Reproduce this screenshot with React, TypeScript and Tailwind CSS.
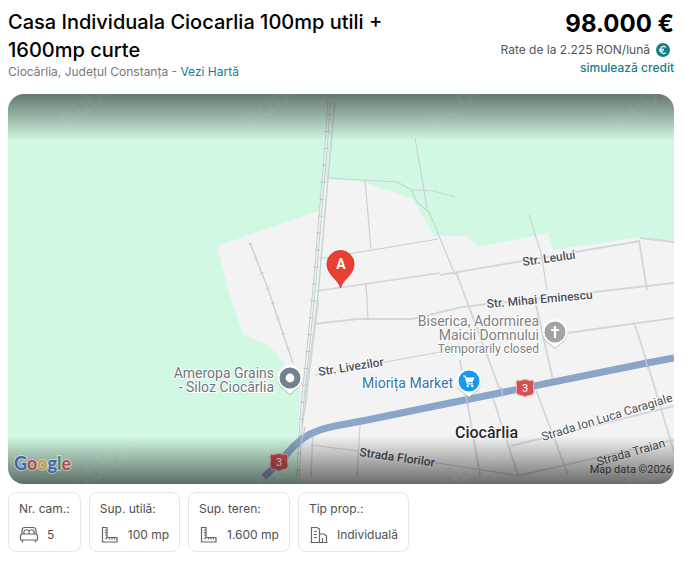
import type { ReactNode } from "react";

const minorRoads = [
  "M328 178 L397 182 L412 190 L434 191 L455 197",
  "M415 138 L427 208",
  "M411 189 L417 202 L429 212 L442 243 L455 275",
  "M365 180 L371 249",
  "M319 259 L438 239",
  "M366 284 L368 319",
  "M529 215 L541 253 L547 290",
  "M315 375 L440 352",
  "M311 445 L358 451",
  "M360 425 L357 477",
  "M425 461 L520 476",
];

const mediumRoads = [
  "M440 275 L640 241",
  "M640 238 L674 242",
  "M456 272 L500 390",
  "M639 240 L647 290",
  "M314 324 L357 319 L412 319 L462 307 L674 283",
  "M536 305 L553 380",
  "M460 360 L466 395 L480 475",
  "M493 398 L518 475",
  "M536 390 L568 475",
  "M567 333 L674 318",
  "M635 325 L647 362 L674 452",
  "M511 446 L674 406",
  "M517 476 L674 440",
];

export default function App() {
  return (
    <main className="w-full bg-white px-2 pr-[11px] pt-2 pb-3 font-['Inter',sans-serif] text-black">
      <header className="flex items-start justify-between">
        <div className="w-2/3">
          <h1 className="text-xl font-medium leading-7">
            Casa Individuala Ciocarlia 100mp utili + 1600mp curte
          </h1>
          <p className="text-xs leading-4 text-[#777777]">
            Ciocârlia, Județul Constanța -{" "}
            <a href="#harta" className="text-[#15808a]">
              Vezi Hartă
            </a>
          </p>
        </div>
        <div className="flex flex-col items-end">
          <p className="text-2xl font-bold leading-8">98.000 €</p>
          <p className="flex items-center gap-1.5 pr-1 text-xs leading-5 text-[#555555]">
            Rate de la 2.225 RON/lună
            <EuroIcon />
          </p>
          <a
            href="#credit"
            className="text-xs font-medium leading-4 text-[#15808a]">
            simulează credit
          </a>
        </div>
      </header>

      <section
        id="harta"
        aria-label="Hartă"
        className="mt-3.5 overflow-hidden rounded-2xl">
        <ListingMap />
      </section>

      <section className="mt-2 flex flex-wrap gap-2">
        <SpecCard label="Nr. cam.:" value="5" icon={<BedIcon />} />
        <SpecCard label="Sup. utilă:" value="100 mp" icon={<RulerIcon />} />
        <SpecCard label="Sup. teren:" value="1.600 mp" icon={<RulerIcon />} />
        <SpecCard
          label="Tip prop.:"
          value="Individuală"
          icon={<BuildingIcon />}
        />
      </section>
    </main>
  );
}

type SpecCardProps = {
  label: string;
  value: string;
  icon: ReactNode;
};

function SpecCard({ label, value, icon }: SpecCardProps) {
  return (
    <div className="flex flex-col gap-1.5 rounded-lg border border-[#e6e6e6] px-2.5 py-1.5 text-xs leading-5 text-[#505050]">
      <span>{label}</span>
      <span className="flex items-center gap-2">
        {icon}
        {value}
      </span>
    </div>
  );
}

function ListingMap() {
  return (
    <svg
      viewBox="8 94 666 390"
      className="block w-full font-['Roboto',sans-serif]">
      <defs>
        <linearGradient id="topShade" x1="0" y1="0" x2="0" y2="1">
          <stop offset="0" stopColor="#000" stopOpacity="0.52" />
          <stop offset="1" stopColor="#000" stopOpacity="0" />
        </linearGradient>
        <linearGradient id="bottomShade" x1="0" y1="1" x2="0" y2="0">
          <stop offset="0" stopColor="#000" stopOpacity="0.56" />
          <stop offset="1" stopColor="#000" stopOpacity="0" />
        </linearGradient>
      </defs>

      <rect x="8" y="94" width="666" height="390" fill="#d1f8e2" />
      <path
        d="M217 246 L318 211 L327 179 L364 182 L413 199 L434 236 L466 236 L479 247 L548 233 L553 250 L639 237 L674 242 V484 H297 L300 388 L282 361 Q272 346 262 342 L243 334 L228 290 Z"
        fill="#f3f3f3"
      />

      {/* streets */}
      <g fill="none" strokeLinejoin="round">
        {minorRoads.map((d) => (
          <path key={d} d={d} stroke="#c9d2d3" strokeWidth="1.2" />
        ))}
        {mediumRoads.map((d) => (
          <path key={d} d={d} stroke="#d0d7dd" strokeWidth="1.9" />
        ))}
        <path d="M317 291 L440 273" stroke="#cfd6d9" strokeWidth="1.4" />
        <path
          d="M335 102 L328 178 L317 307 L306 400 L300 440"
          stroke="#c9d2d3"
          strokeWidth="1.5"
        />
        <path d="M318 300 L306 395" stroke="#d0d7dd" strokeWidth="2.4" />
        <path d="M313 430 L311 477" stroke="#d0d7dd" strokeWidth="1.5" />
      </g>

      {/* railway */}
      <g fill="none">
        <path
          d="M329 102 L326 148 L314 290 L307 360 L302 407 L298 477"
          stroke="#b9c6c3"
          strokeWidth="3.2"
        />
        <path
          d="M329 102 L326 148 L314 290 L307 360 L302 407 L298 477"
          stroke="#e8efed"
          strokeWidth="1.8"
        />
        <path
          d="M329 114 L326 148 L314 290 L307 360 L302 407 L298 477"
          stroke="#b9c6c3"
          strokeWidth="5"
          strokeDasharray="1 16"
        />
        <path d="M250 243 L268 289 L293 363" stroke="#c8cccd" strokeWidth="1.3" />
        <path
          d="M250 243 L268 289 L293 363"
          stroke="#c8cccd"
          strokeWidth="4"
          strokeDasharray="1 15"
        />
      </g>

      {/* DN3 */}
      <path
        d="M264 477 L281 461 Q293 445 305 437 Q316 430 335 426 L367 420 L450 403 L647 363 L674 358"
        fill="none"
        stroke="#8aa5c8"
        strokeWidth="7"
      />
      <g stroke="#bccbdd" strokeWidth="1.3">
        <path d="M305 427 L300 448" />
        <path d="M466 396 L468 407" />
        <path d="M501 387 L503 397" />
        <path d="M645 358 L648 369" />
      </g>

      {/* street names */}
      <g
        fill="#4a5058"
        fontSize="12"
        fontWeight="500"
        stroke="#ffffff"
        strokeOpacity="0.8"
        strokeWidth="2"
        paintOrder="stroke">
        <text transform="translate(523 266) rotate(-8)">Str. Leului</text>
        <text transform="translate(487 308) rotate(-5)">Str. Mihai Eminescu</text>
        <text transform="translate(319 376) rotate(-9)">Str. Livezilor</text>
        <text transform="translate(359 456) rotate(8)">Strada Florilor</text>
        <text transform="translate(543 441) rotate(-17)" fontWeight="400">
          Strada Ion Luca Caragiale
        </text>
        <text transform="translate(598 466) rotate(-16)" fontWeight="400">
          Strada Traian
        </text>
      </g>

      {/* places */}
      <g
        fontSize="14"
        textAnchor="end"
        fill="#6d7680"
        stroke="#ffffff"
        strokeWidth="2"
        paintOrder="stroke">
        <text x="274" y="378">Ameropa Grains</text>
        <text x="274" y="392">- Siloz Ciocârlia</text>
        <text x="539" y="326" fill="#808080">Biserica, Adormirea</text>
        <text x="539" y="340" fill="#808080">Maicii Domnului</text>
        <text x="539" y="353" fill="#808080" fontSize="12">
          Temporarily closed
        </text>
        <text x="453" y="388" fill="#3474ad">Miorița Market</text>
        <text x="518" y="438" fill="#26282b" fontSize="16" fontWeight="500">
          Ciocârlia
        </text>
      </g>

      <PlacePin x={290} y={378} color="#71818f">
        <circle r="4.4" fill="#fff" />
      </PlacePin>
      <PlacePin x={555} y={332} color="#a3a3a3">
        <path
          d="M0 -6 V6 M-4 -2 H4"
          stroke="#fff"
          strokeWidth="2.2"
          fill="none"
        />
      </PlacePin>
      <PlacePin x={469} y={381} color="#1b97f0">
        <path d="M-3.3 -3.5 H5.5 L3.5 1.2 H-2 Z" fill="#fff" />
        <path
          d="M-6 -5 H-4 L-1.5 2.8 H4"
          stroke="#fff"
          strokeWidth="1.2"
          fill="none"
        />
        <circle cx="-1.3" cy="5" r="1.2" fill="#fff" />
        <circle cx="3.3" cy="5" r="1.2" fill="#fff" />
      </PlacePin>

      <RoadShield x={525} y={388} />
      <RoadShield x={279} y={462} />

      {/* listing marker */}
      <path
        d="M340.5 288 C339 280 327 275 327 264 A13.5 13.5 0 0 1 354 264 C354 275 342 280 340.5 288 Z"
        fill="#ea3f33"
        stroke="#c9291f"
        strokeWidth="0.8"
      />
      <text
        x="341"
        y="269"
        fill="#fff"
        fontSize="14"
        fontWeight="700"
        textAnchor="middle">
        A
      </text>

      <rect x="8" y="94" width="666" height="47" fill="url(#topShade)" />
      <rect x="8" y="436" width="666" height="48" fill="url(#bottomShade)" />

      {/* watermark */}
      <g fill="#fff" fillOpacity="0.05" fontSize="30" fontWeight="500">
        {[130, 317, 504].map((y) =>
          [66, 251, 436, 621].map((x) => (
            <text key={`${x}-${y}`} transform={`translate(${x} ${y}) rotate(-37)`}>
              publi24.ro
            </text>
          ))
        )}
      </g>

      <text
        x="14"
        y="470"
        fontSize="18"
        stroke="#ffffff"
        strokeOpacity="0.45"
        strokeWidth="2"
        paintOrder="stroke"
        className="font-['Lato',sans-serif] font-bold">
        <tspan fill="#3f68a8">G</tspan>
        <tspan fill="#b94a48">o</tspan>
        <tspan fill="#c9a13b">o</tspan>
        <tspan fill="#3f68a8">g</tspan>
        <tspan fill="#3f8a5c">l</tspan>
        <tspan fill="#b94a48">e</tspan>
      </text>
      <text x="672" y="473" fontSize="11" textAnchor="end" fill="#2b2b2b">
        Map data ©2026
      </text>
    </svg>
  );
}

type PlacePinProps = {
  x: number;
  y: number;
  color: string;
  children: ReactNode;
};

function PlacePin({ x, y, color, children }: PlacePinProps) {
  const shape = "M0 16 L-6.5 10.5 A12.5 12.5 0 1 1 6.5 10.5 Z";
  return (
    <g transform={`translate(${x} ${y})`}>
      <path d={shape} fill="#8d9a96" fillOpacity="0.6" transform="translate(0 1)" />
      <path d={shape} fill="#fff" />
      <circle r="10.5" fill={color} />
      {children}
    </g>
  );
}

function RoadShield({ x, y }: { x: number; y: number }) {
  return (
    <g transform={`translate(${x} ${y})`}>
      <path
        d="M-8 -8 Q-5 -6.5 -3 -8 Q0 -9 3 -8 Q5 -6.5 8 -8 L9 -5 Q7.5 -1 9 3 Q9 7 4 7.5 Q2 7.5 0 9 Q-2 7.5 -4 7.5 Q-9 7 -9 3 Q-7.5 -1 -9 -5 Z"
        fill="#d5504f"
        stroke="#f0b9b8"
        strokeWidth="1"
      />
      <text y="4" fill="#fff" fontSize="11" textAnchor="middle">
        3
      </text>
    </g>
  );
}

function EuroIcon() {
  return (
    <svg viewBox="0 0 14 14" className="size-3.5" aria-hidden="true">
      <circle cx="7" cy="7" r="7" fill="#15808a" />
      <path
        d="M10 4.3 A3.5 3.5 0 1 0 10 9.7 M3.2 6.2 H8 M3.2 7.9 H7.6"
        fill="none"
        stroke="#fff"
        strokeWidth="1.1"
      />
    </svg>
  );
}

function BedIcon() {
  return (
    <svg
      viewBox="0 0 20 20"
      className="size-5"
      fill="none"
      stroke="#666"
      strokeWidth="1.2"
      aria-hidden="true">
      <path d="M3 9 V5.5 Q3 2.5 6 2.5 H14 Q17 2.5 17 5.5 V9" />
      <path d="M5 9 V6.5 Q5 5 6.5 5 H8.5 Q10 5 10 6.5 V9 M10 6.5 Q10 5 11.5 5 H13.5 Q15 5 15 6.5 V9" />
      <path d="M3.5 9 H16.5 Q18.5 9 18.5 11.5 V15 H1.5 V11.5 Q1.5 9 3.5 9 Z M3.5 15 V17.5 M16.5 15 V17.5" />
    </svg>
  );
}

function RulerIcon() {
  return (
    <svg
      viewBox="0 0 20 20"
      className="size-5"
      fill="none"
      stroke="#666"
      strokeWidth="1.2"
      aria-hidden="true">
      <path d="M2.5 2.5 H7 V12.5 H17 V17 H2.5 Z" />
      <path d="M7 5 H5 M7 7.5 H5 M7 10 H5 M7 12.5 L5.5 14 M9.5 12.5 V14.5 M12 12.5 V14.5 M14.5 12.5 V14.5" />
    </svg>
  );
}

function BuildingIcon() {
  return (
    <svg
      viewBox="0 0 20 20"
      className="size-5"
      fill="none"
      stroke="#666"
      strokeWidth="1.2"
      aria-hidden="true">
      <path d="M2.5 17.5 V2.5 H8 L10.5 4 V17.5 M10.5 9 H15 L17.5 11 V17.5 M1.5 17.5 H18.5" />
      <path d="M5 6.5 H8 M5 9.5 H8 M5 12.5 H8 M13.5 17.5 V13" />
    </svg>
  );
}
